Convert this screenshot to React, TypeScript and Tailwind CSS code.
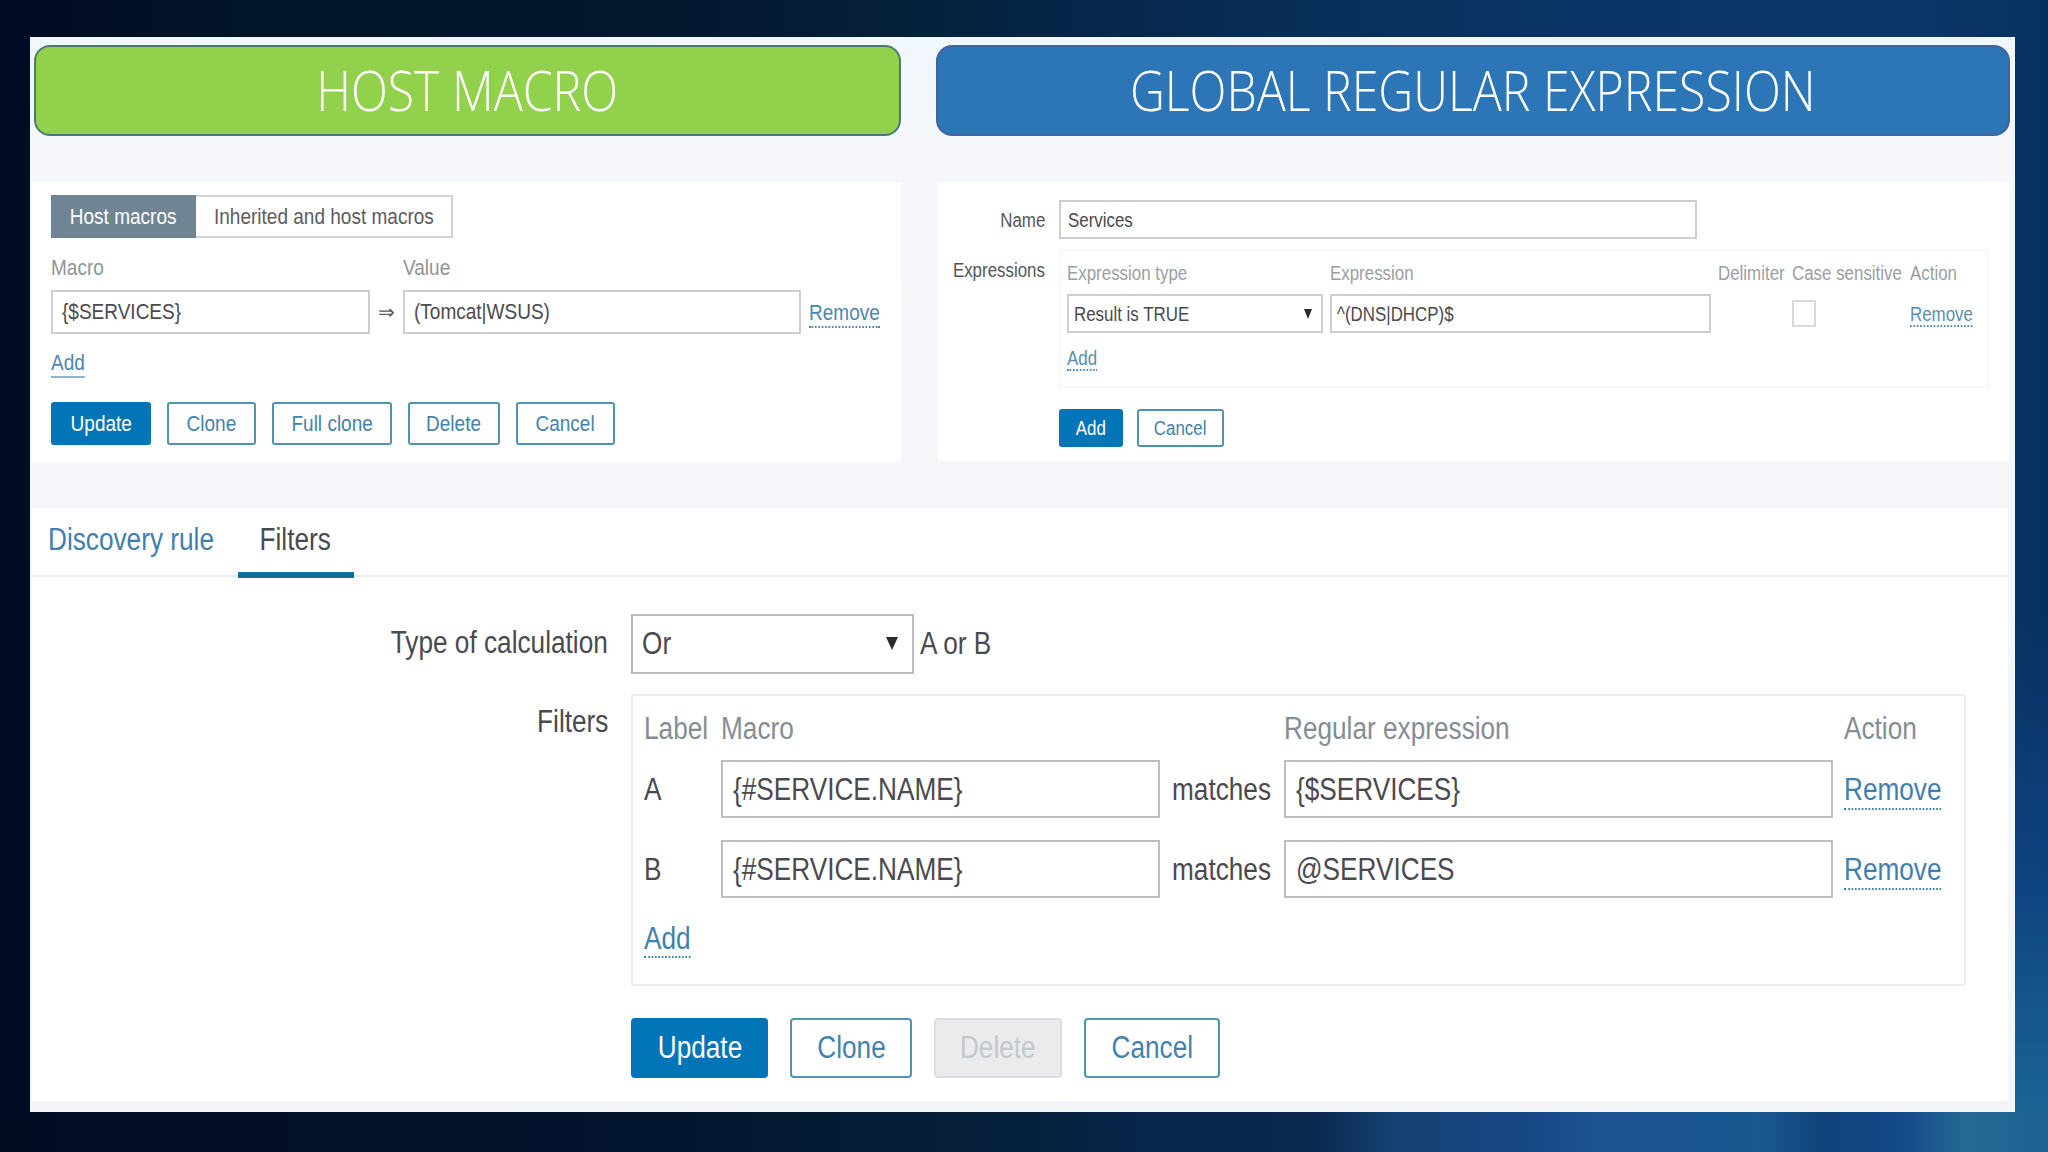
import type { ReactNode } from 'react';
import clsx from 'clsx';

interface TextProps {
    children: ReactNode;
    className?: string;
}

// Narrow text, the dialogs use a horizontally squeezed Arial
function Text({ children, className }: TextProps) {
    return (
        <span className={clsx('inline-block whitespace-nowrap scale-x-[0.845]', className ?? 'origin-left')}>
            {children}
        </span>
    );
}

interface ButtonProps {
    label: string;
    className: string;
    variant?: 'primary' | 'outline' | 'disabled';
}

function Button({ label, className, variant = 'outline' }: ButtonProps) {
    return (
        <button
            className={clsx(
                'flex shrink-0 items-center justify-center border-2',
                variant === 'primary' && 'border-[#0275b8] bg-[#0275b8] text-white',
                variant === 'outline' && 'border-[#4f93b5] bg-white text-[#4482ae]',
                variant === 'disabled' && 'border-[#dcdee0] bg-[#ebebed] text-[#c3c8cc]',
                className,
            )}
        >
            <Text className="origin-center">{label}</Text>
        </button>
    );
}

function Field({ value, className }: { value: string; className: string }) {
    return (
        <div className={clsx('flex shrink-0 items-center border-2 bg-white text-[#4a4a4e]', className)}>
            <Text>{value}</Text>
        </div>
    );
}

function Link({ label, className }: { label: string; className?: string }) {
    return (
        <a className={clsx('inline-block origin-left scale-x-[0.845] whitespace-nowrap border-b-2', className)}>
            {label}
        </a>
    );
}

function Arrow({ className }: { className: string }) {
    return (
        <svg viewBox="0 0 10 10" preserveAspectRatio="none" className={className}>
            <path d="M0 0H10L5 10Z" fill="#2b2b2e" />
        </svg>
    );
}

function HostMacros() {
    return (
        <section className="h-[280px] w-[869px] bg-white pt-[13px] pl-[19px] text-[22.5px] leading-[26px]">
            <div className="flex h-[43px] w-[402px] border-2 border-[#cfd3d6]">
                <div className="-my-0.5 -ml-0.5 flex w-[145px] shrink-0 items-center justify-center bg-[#6f8593] text-white">
                    <Text className="origin-center">Host macros</Text>
                </div>
                <div className="flex flex-1 items-center pl-[18px] text-[#5c5c60]">
                    <Text>Inherited and host macros</Text>
                </div>
            </div>
            <div className="mt-[17px] flex text-[#8d949a]">
                <div className="w-[352px]"><Text>Macro</Text></div>
                <Text>Value</Text>
            </div>
            <div className="mt-[9px] flex h-11 items-center">
                <Field value="{$SERVICES}" className="h-full w-[319px] border-[#cdcdd0] pl-[9px]" />
                <div className="w-[33px] text-center text-[20px] text-[#5c5c60]">⇒</div>
                <Field value="(Tomcat|WSUS)" className="h-full w-[398px] border-[#cdcdd0] pl-[9px]" />
                <div className="ml-2 pt-[3px] text-[#4b87ad]"><Link label="Remove" className="border-dotted" /></div>
            </div>
            <div className="mt-4 h-[30px] text-[#4b87ad]">
                <Link label="Add" className="border-solid border-[#8fb3ca]" />
            </div>
            <div className="mt-[22px] flex h-[43px] gap-4">
                <Button label="Update" variant="primary" className="w-[100px] rounded-[3px]" />
                <Button label="Clone" className="w-[89px] rounded-[3px]" />
                <Button label="Full clone" className="w-[120px] rounded-[3px]" />
                <Button label="Delete" className="w-[92px] rounded-[3px]" />
                <Button label="Cancel" className="w-[99px] rounded-[3px]" />
            </div>
        </section>
    );
}

function GlobalExpression() {
    return (
        <section className="h-[279px] w-[1071px] bg-white pt-[18px] text-[20px] leading-6">
            <div className="flex h-[39px] items-center">
                <div className="flex w-[107px] justify-end text-[#55555a]"><Text className="origin-right">Name</Text></div>
                <Field value="Services" className="ml-3.5 h-full w-[638px] border-[#cdcdd0] pl-[7px]" />
            </div>
            <div className="mt-2.5 flex">
                <div className="flex w-[107px] justify-end pt-[9px] text-[#55555a]">
                    <Text className="origin-right">Expressions</Text>
                </div>
                <div className="ml-3.5 h-[139px] w-[930px] border-2 border-[#f7f7f9] pt-2.5 pl-1.5">
                    <div className="flex text-[#9a9fa4]">
                        <div className="w-[263px]"><Text>Expression type</Text></div>
                        <div className="w-[388px]"><Text>Expression</Text></div>
                        <div className="w-[74px]"><Text>Delimiter</Text></div>
                        <div className="w-[118px]"><Text>Case sensitive</Text></div>
                        <Text>Action</Text>
                    </div>
                    <div className="mt-[9px] flex h-[39px] items-center">
                        <div className="flex h-full w-[256px] items-center justify-between border-2 border-[#cdcdd0] pr-[9px] pl-[5px] text-[#4a4a4e]">
                            <Text>Result is TRUE</Text>
                            <Arrow className="h-2.5 w-2" />
                        </div>
                        <Field value="^(DNS|DHCP)$" className="ml-[7px] h-full w-[381px] border-[#cdcdd0] pl-[5px]" />
                        <div className="ml-[81px] h-[27px] w-6 border-2 border-[#d9dadd]" />
                        <div className="ml-[94px] pt-px text-[#5590b2]">
                            <Link label="Remove" className="border-dotted leading-[21px]" />
                        </div>
                    </div>
                    <div className="mt-[13px] text-[#5590b2]"><Link label="Add" className="border-dotted leading-[22px]" /></div>
                </div>
            </div>
            <div className="mt-[21px] ml-[121px] flex h-[38px] gap-3.5">
                <Button label="Add" variant="primary" className="w-16 rounded-[3px]" />
                <Button label="Cancel" className="w-[87px] rounded-[3px]" />
            </div>
        </section>
    );
}

const filters = [
    { label: 'A', macro: '{#SERVICE.NAME}', expression: '{$SERVICES}' },
    { label: 'B', macro: '{#SERVICE.NAME}', expression: '@SERVICES' },
];

function DiscoveryRule() {
    return (
        <section className="h-[593px] w-[1976px] bg-white text-[31px] leading-9 text-[#4a4a4e]">
            <div className="flex h-[69px] border-b-2 border-[#ebeef1]">
                <div className="w-[206px] pt-3.5 pl-4 text-[#3f80ae]"><Text>Discovery rule</Text></div>
                <div className="-mb-1 h-[70px] w-[116px] border-b-[6px] border-[#0e7099] pt-3.5 pr-0.5 text-center">
                    <Text className="-mx-4 origin-center">Filters</Text>
                </div>
            </div>
            <div className="mt-[37px] flex h-[60px] items-center">
                <div className="flex w-[576px] justify-end pb-[3px]"><Text className="origin-right">Type of calculation</Text></div>
                <div className="ml-[23px] flex h-full w-[283px] items-center justify-between border-2 border-[#b9bbbe] pr-3.5 pl-[9px]">
                    <Text>Or</Text>
                    <Arrow className="mb-0.5 h-[13px] w-3" />
                </div>
                <Text className="ml-1.5 origin-left">A or B</Text>
            </div>
            <div className="mt-5 flex">
                <div className="flex w-[576px] justify-end self-start pt-2.5"><Text className="origin-right">Filters</Text></div>
                <div className="ml-[23px] h-[292px] w-[1335px] border-2 border-[#eeeef1] pt-[15px] pl-[11px]">
                    <div className="flex text-[#858d94]">
                        <div className="w-[77px]"><Text>Label</Text></div>
                        <div className="w-[563px]"><Text>Macro</Text></div>
                        <div className="w-[560px]"><Text>Regular expression</Text></div>
                        <Text>Action</Text>
                    </div>
                    <div className="mt-[13px] flex flex-col gap-[22px]">
                        {filters.map((filter) => (
                            <div key={filter.label} className="flex h-[58px] items-center">
                                <div className="w-[77px] pt-0.5"><Text>{filter.label}</Text></div>
                                <Field value={filter.macro} className="h-full w-[439px] border-[#bcbec0] pt-px pl-2.5" />
                                <div className="w-[124px] pt-0.5 pl-3"><Text>matches</Text></div>
                                <Field value={filter.expression} className="h-full w-[549px] border-[#bcbec0] pt-px pl-2.5" />
                                <div className="pt-1 pl-[11px] text-[#3f80ae]"><Link label="Remove" className="border-dotted" /></div>
                            </div>
                        ))}
                    </div>
                    <div className="mt-[23px] text-[#3f80ae]"><Link label="Add" className="border-dotted leading-[35px]" /></div>
                </div>
            </div>
            <div className="mt-8 ml-[599px] flex h-[60px] gap-[22px]">
                <Button label="Update" variant="primary" className="w-[137px] rounded-[4px]" />
                <Button label="Clone" className="w-[122px] rounded-[4px]" />
                <Button label="Delete" variant="disabled" className="w-[128px] rounded-[4px]" />
                <Button label="Cancel" className="w-[136px] rounded-[4px]" />
            </div>
        </section>
    );
}

function Heading({ title, className }: { title: string; className: string }) {
    return (
        <h1
            className={clsx(
                "flex h-[91px] items-center justify-center rounded-[16px] border-2 pb-1 font-['Open_Sans',sans-serif] text-[56px] font-light text-white",
                className,
            )}
        >
            <span className="scale-x-[0.862] whitespace-nowrap">{title}</span>
        </h1>
    );
}

export default function App() {
    return (
        <main className="flex h-[1152px] w-[2048px] flex-col overflow-hidden bg-[linear-gradient(90deg,#020b24_0%,#021429_12%,#04172f_32%,#041f36_42%,#07264a_53%,#08305a_65%,#0b3567_78%,#0b3768_94%,#06305f_100%)] font-['Liberation_Sans',Arial,sans-serif]">
            <div className="flex h-[1112px] bg-[linear-gradient(180deg,#08346400_55%,#0f4482_80%,#1a6494_100%)] bg-[length:33px_100%] bg-right bg-no-repeat pt-[37px] pl-[30px]">
                <div className="h-[1075px] w-[1985px] bg-[linear-gradient(180deg,#f0f7fd_0px,#f5f7fa_110px,#f4f5f9_100%)] pt-2">
                    <div className="flex gap-[35px] pl-1">
                        <Heading title="HOST MACRO" className="w-[867px] border-[#4c7a72] bg-[#92d14c]" />
                        <Heading title="GLOBAL REGULAR EXPRESSION" className="w-[1074px] border-[#41659b] bg-[#2c75b7]" />
                    </div>
                    <div className="mt-[46px] flex gap-[37px] pl-0.5">
                        <HostMacros />
                        <GlobalExpression />
                    </div>
                    <div className="mt-[46px] pl-0.5">
                        <DiscoveryRule />
                    </div>
                </div>
            </div>
            <div className="h-10 bg-[linear-gradient(90deg,#020d24_0%,#03122c_28%,#041b34_40%,#06213c_50%,#08254c_56%,#0a274e_64%,#154273_68%,#164684_74%,#1c5292_78%,#195891_86%,#10437a_89%,#14498a_93%,#256a94_96%,#1c6193_100%)]" />
        </main>
    );
}
